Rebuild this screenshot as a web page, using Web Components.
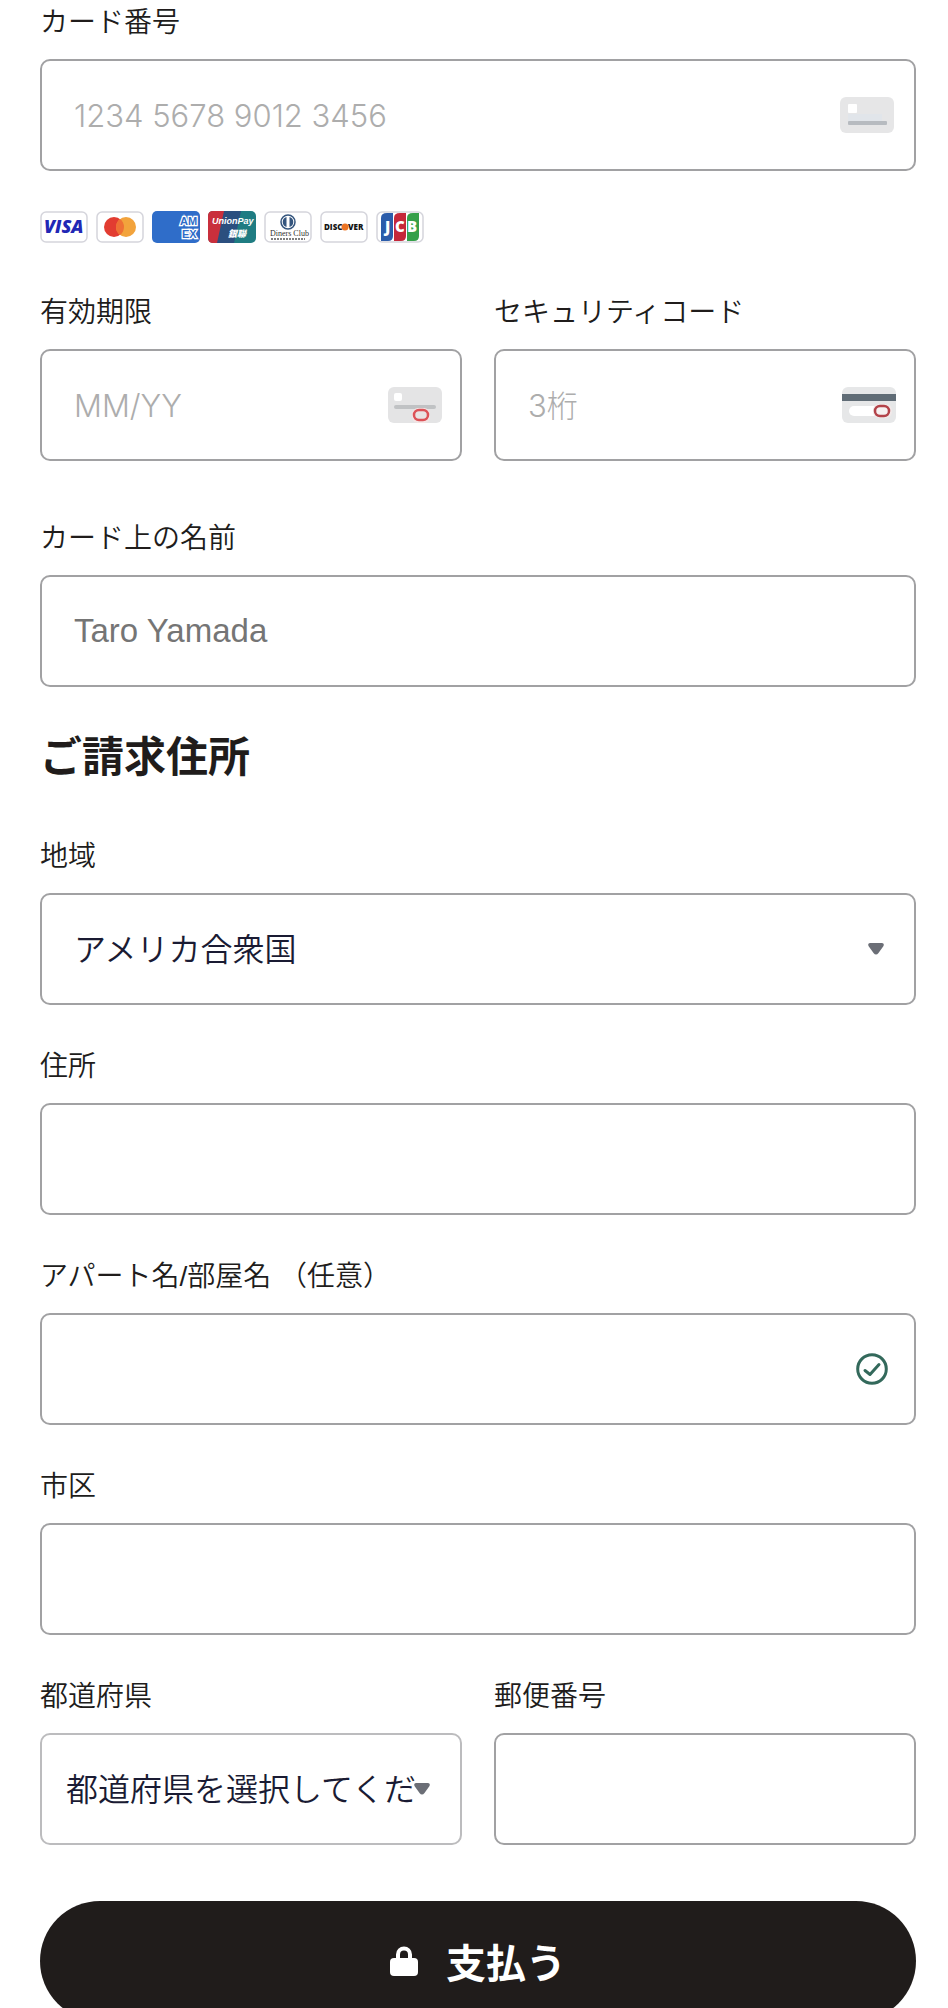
<!DOCTYPE html>
<html lang="ja">
<head>
<meta charset="utf-8">
<meta name="viewport" content="width=device-width, initial-scale=1">
<title>お支払い</title>
<style>
  body { margin: 0; background: #fff; color: #201c1b; font-family: Inter, "Noto Sans CJK JP", sans-serif; }
</style>
</head>
<body>
<checkout-form></checkout-form>

<script>
const define = (name, html, setup) => {
  const template = document.createElement('template');
  template.innerHTML = html;
  customElements.define(name, class extends HTMLElement {
    constructor() {
      super();
      this.attachShadow({ mode: 'open' }).append(template.content.cloneNode(true));
    }
    connectedCallback() { if (setup) setup(this, this.shadowRoot); }
  });
};

const fieldStyle = `
  :host { display: block; min-width: 0; }
  label {
    display: block; margin-bottom: 14px; font-size: 28px; line-height: 44px; font-weight: 350;
    font-family: "Liberation Sans", "Noto Sans CJK JP", sans-serif;
  }
  .box { display: grid; grid-template-columns: minmax(0, 1fr); align-items: center; }
  .box > * { grid-area: 1 / 1; }
  input, select {
    box-sizing: border-box; width: 100%; height: 112px; margin: 0;
    padding: 0 32px; border: 2px solid #a1a1a3; border-radius: 10px;
    background: #fff; color: #1a1b33; font: inherit; font-size: 32px; font-weight: 350;
    appearance: none; outline: none;
  }
  input { font-size: 31px; font-weight: 300; }
  input::placeholder { color: #adadad; opacity: 1; }
`;

/* Labelled text box, with an optional icon at its right end. */
define('text-field', `
  <style>${fieldStyle}
    .end { justify-self: end; display: flex; margin-right: 22px; pointer-events: none; }
    :host([plain]) input { font-family: "Liberation Sans", sans-serif; font-size: 33px; font-weight: 400; }
    :host([plain]) input::placeholder { color: #757575; }
    :host([checked]) .end { margin-right: 28px; }
    :host([half]) .end { margin-right: 20px; }
  </style>
  <label for="control"></label>
  <div class="box">
    <input id="control" type="text">
    <span class="end"><slot></slot></span>
  </div>`,
  (host, root) => {
    root.querySelector('label').textContent = host.getAttribute('label');
    root.querySelector('input').placeholder = host.getAttribute('placeholder') || '';
  });

/* Labelled drop-down with its own arrow. */
define('select-field', `
  <style>${fieldStyle}
    svg { justify-self: end; margin-right: 32px; pointer-events: none; }
    :host([compact]) select { padding: 0 40px 0 24px; border-color: #bcbcbe; }
  </style>
  <label for="control"></label>
  <div class="box">
    <select id="control"><option></option></select>
    <svg width="16" height="12" viewBox="0 0 16 12" aria-hidden="true">
      <path d="M2 0H14Q16.500 0 15.500 3L10.500 10Q8 13 5.500 10L.5 3Q-.5 0 2 0Z" fill="#6b6e76"/>
    </svg>
  </div>`,
  (host, root) => {
    root.querySelector('label').textContent = host.getAttribute('label');
    root.querySelector('option').textContent = host.getAttribute('value');
  });

/* Two fields side by side. */
define('field-pair', `
  <style>:host { display: grid; grid-template-columns: 1fr 1fr; gap: 32px; }</style>
  <slot></slot>`);

/* Small grey cards: the front, the expiry date and the security code. */
const cards = {
  number: `<rect width="54" height="36" rx="6" fill="#e6e6e7"/>
    <rect x="8" y="7" width="9" height="9" rx="1" fill="#fff"/>
    <rect x="8" y="17" width="34" height="7" fill="#e1e5ea"/>
    <rect x="8" y="24" width="39" height="4" rx="1" fill="#b7bbc0"/>`,
  expiry: `<rect width="54" height="36" rx="6" fill="#e4e4e5"/>
    <rect x="6" y="6" width="8" height="8" rx="2" fill="#fff"/>
    <rect x="6" y="18" width="42" height="4" rx="2" fill="#c0c2c4"/>
    <rect x="24" y="21" width="18" height="15" rx="6" fill="#f3e4e4"/>
    <rect x="26" y="23" width="14" height="10" rx="5" fill="#e9e3e3" stroke="#dc5257" stroke-width="2.500"/>`,
  code: `<rect width="54" height="36" rx="6" fill="#e6e7e8"/>
    <rect y="7" width="54" height="7" fill="#606c76"/>
    <rect x="7" y="19" width="36" height="10" rx="5" fill="#fff"/>
    <rect x="31" y="17" width="19" height="14" rx="6" fill="#f1e9e9"/>
    <rect x="33" y="19" width="14" height="10" rx="5" fill="#f6f1f1" stroke="#b3434a" stroke-width="2.500"/>`
};
define('card-icon', `
  <style>:host, svg { display: block; }</style>
  <svg width="54" height="36" viewBox="0 0 54 36" aria-hidden="true"></svg>`,
  (host, root) => { root.querySelector('svg').innerHTML = cards[host.getAttribute('kind')]; });

define('check-icon', `
  <style>:host, svg { display: block; }</style>
  <svg width="32" height="32" viewBox="0 0 32 32" fill="none" stroke="#33695b" stroke-width="3" aria-hidden="true">
    <circle cx="16" cy="16" r="14.300"/>
    <path d="M9 17.500L14 21.500L23 11.500" stroke-linecap="round" stroke-linejoin="round"/>
  </svg>`);

/* Accepted card brands. */
define('card-brands', `
  <style>
    :host { display: flex; gap: 8px; }
    svg { display: block; width: 48px; height: 32px; }
    text { font-family: "Open Sans", sans-serif; }
    .tight { font-family: "Liberation Sans", sans-serif; }
  </style>
  <svg viewBox="0 0 48 32" role="img" aria-label="Visa">
    <rect x="1" y="1" width="46" height="30" rx="5" fill="#fff" stroke="#d5d5dc" stroke-width="1.500"/>
    <text x="4" y="22" font-size="18" font-weight="800" font-style="italic" fill="#2127b5">VISA</text>
  </svg>
  <svg viewBox="0 0 48 32" role="img" aria-label="Mastercard">
    <rect x="1" y="1" width="46" height="30" rx="5" fill="#fff" stroke="#d5d5dc" stroke-width="1.500"/>
    <circle cx="18" cy="16" r="10" fill="#e23c31"/><circle cx="30" cy="16" r="10" fill="#f2a33c"/>
    <path d="M24 8A10 10 0 0 1 24 24A10 10 0 0 1 24 8Z" fill="#ee7035"/>
  </svg>
  <svg viewBox="0 0 48 32" role="img" aria-label="American Express">
    <rect width="48" height="32" rx="5" fill="#2f6dc9"/>
    <g font-size="11" font-weight="700" fill="#2f6dc9" stroke="#fff" stroke-width="2.500" paint-order="stroke">
      <text class="tight" x="28" y="14">AM</text><text class="tight" x="30" y="27">EX</text></g>
  </svg>
  <svg viewBox="0 0 48 32" role="img" aria-label="UnionPay">
    <rect width="48" height="32" rx="5" fill="#1f7c82"/>
    <path d="M5 0H17L10 32H5Q0 32 0 27V5Q0 0 5 0Z" fill="#c92f3c"/>
    <path d="M16 0H33L26 32H9Z" fill="#2b4f7f"/>
    <text class="tight" x="4" y="13" font-size="9" font-weight="700" font-style="italic" fill="#fff">UnionPay</text>
    <text x="20" y="26" font-size="9" font-weight="900" font-style="italic" fill="#fff" style="font-family:'Noto Sans CJK JP',sans-serif">銀聯</text>
  </svg>
  <svg viewBox="0 0 48 32" role="img" aria-label="Diners Club">
    <rect x="1" y="1" width="46" height="30" rx="5" fill="#fff" stroke="#d5d5dc" stroke-width="1.500"/>
    <circle cx="24" cy="11" r="7" fill="#fff" stroke="#34557e" stroke-width="1.500"/>
    <path d="M22.500 6A5.200 5.200 0 0 0 22.500 16ZM25.500 6A5.200 5.200 0 0 1 25.500 16Z" fill="#34557e"/>
    <text x="6" y="25" font-size="8" fill="#333" style="font-family:'Liberation Serif',serif">Diners Club</text>
    <path d="M7 28H41" stroke="#555" stroke-width="1.500" stroke-dasharray="2 1"/>
  </svg>
  <svg viewBox="0 0 48 32" role="img" aria-label="Discover">
    <rect x="1" y="1" width="46" height="30" rx="5" fill="#fff" stroke="#d5d5dc" stroke-width="1.500"/>
    <g font-size="8" font-weight="800" fill="#151515"><text x="4" y="19">DISC</text><text x="28" y="19">VER</text></g>
    <circle cx="25" cy="16" r="3.500" fill="#ec7424"/>
  </svg>
  <svg viewBox="0 0 48 32" role="img" aria-label="JCB">
    <rect x="1" y="1" width="46" height="30" rx="5" fill="#fff" stroke="#d5d5dc" stroke-width="1.500"/>
    <path d="M11 2H17V25Q17 30 12 30H5V7Q5 2 11 2Z" fill="#2b5caa"/>
    <path d="M24 2H30V25Q30 30 25 30H18V7Q18 2 24 2Z" fill="#c5283a"/>
    <path d="M37 2H43V25Q43 30 38 30H31V7Q31 2 37 2Z" fill="#36a04a"/>
    <g font-size="15" font-weight="800" fill="#fff"><text x="9" y="21">J</text><text x="19" y="21">C</text><text x="31" y="21">B</text></g>
  </svg>`);

define('pay-button', `
  <style>
    :host { display: block; }
    button {
      display: flex; align-items: center; justify-content: center; gap: 28px;
      width: 100%; height: 120px; border: 0; border-radius: 60px; padding: 0;
      background: #201c1b; color: #fff; font: inherit; font-size: 40px; font-weight: 700;
    }
  </style>
  <button type="submit">
    <svg width="28" height="30" viewBox="0 0 28 30" aria-hidden="true">
      <rect y="12" width="28" height="18" rx="4" fill="#fff"/>
      <path d="M8 14V8.500a6 6 0 0 1 12 0V14" fill="none" stroke="#fff" stroke-width="4"/>
    </svg>
    <span><slot></slot></span>
  </button>`);

define('checkout-form', `
  <style>
    :host { display: block; }
    form { display: flex; flex-direction: column; gap: 40px; padding: 1px 32px 40px 40px; }
    card-brands { margin-bottom: 8px; }
    .expiry, .prefecture { margin-bottom: 16px; }
    h2 { margin: 0 0 8px; font-size: 42px; line-height: 60px; font-weight: 700; }
  </style>
  <form>
    <text-field label="カード番号" placeholder="1234 5678 9012 3456"><card-icon kind="number"></card-icon></text-field>
    <card-brands></card-brands>
    <field-pair class="expiry">
      <text-field half label="有効期限" placeholder="MM/YY"><card-icon kind="expiry"></card-icon></text-field>
      <text-field half label="セキュリティコード" placeholder="3桁"><card-icon kind="code"></card-icon></text-field>
    </field-pair>
    <text-field plain label="カード上の名前" placeholder="Taro Yamada"></text-field>
    <h2>ご請求住所</h2>
    <select-field label="地域" value="アメリカ合衆国"></select-field>
    <text-field label="住所"></text-field>
    <text-field checked label="アパート名/部屋名 （任意）"><check-icon></check-icon></text-field>
    <text-field label="市区"></text-field>
    <field-pair class="prefecture">
      <select-field compact label="都道府県" value="都道府県を選択してください"></select-field>
      <text-field label="郵便番号"></text-field>
    </field-pair>
    <pay-button>支払う</pay-button>
  </form>`);
</script>
</body>
</html>
